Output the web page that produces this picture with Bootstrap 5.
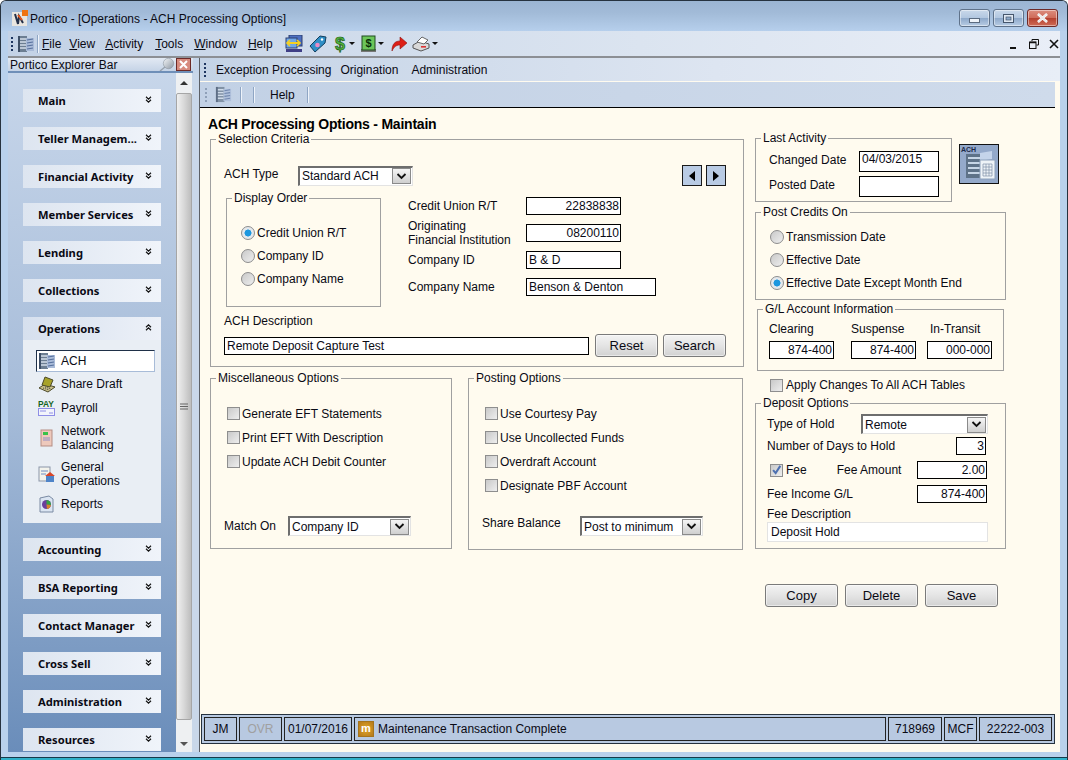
<!DOCTYPE html>
<html lang="en">
<head>
<meta charset="utf-8">
<title>Portico - ACH Processing Options</title>
<link href="https://cdn.jsdelivr.net/npm/bootstrap@5.3.0/dist/css/bootstrap.min.css" rel="stylesheet">
<style>
html,body{margin:0;width:1068px;height:760px;overflow:hidden;background:#fff}
body{font:12px/14px "Liberation Sans",Arial,sans-serif;color:#0a0a14}
.appwin{width:1068px;height:760px;display:flex;flex-direction:column;border:1px solid #26323f;border-bottom:0;border-radius:6px 6px 0 0;background:linear-gradient(#97b3d2,#b9d1ec 4%,#b9d1ec);overflow:hidden}
.titlebar{height:30px;flex:none;display:flex;align-items:center;padding:0 9px 0 10px;background:linear-gradient(#9bb5d3,#a2bbd8 40%,#b6cfec)}
.titlebar .ttl{margin-left:2px;font-size:12px;padding-top:5px}
.titlebar .tico{margin-top:5px}
.winbtns{margin-left:auto;display:flex;gap:3px;margin-top:4px}
.winbtn{width:31px;height:18px;border:1px solid #5f728a;border-radius:3px;background:linear-gradient(#c9d8ea,#b2c7e0 48%,#8ea9ca 52%,#b8cce4);display:flex;align-items:center;justify-content:center;box-shadow:inset 0 0 0 1px rgba(255,255,255,.45)}
.winbtn.cls{border-color:#6d2a28;background:linear-gradient(#dc8d7e,#cf6c5a 48%,#b5412f 52%,#cf6a55)}
.winbody{margin:0 7px;flex:none}
.menubar{height:27px;display:flex;align-items:center;background:linear-gradient(90deg,#c3d2e6,#dbe4f0 60%,#e9eef7);border-bottom:2px solid #8c8f94;padding-left:3px}
.grip{width:2px;height:14px;flex:none;background-image:linear-gradient(#1d3560 50%,transparent 50%);background-size:2px 4px}
.menuitem u{text-decoration-thickness:1px;text-underline-offset:1px}
.mitems{display:flex;align-items:center;height:100%}
.mdibtns{margin-left:auto;display:flex;align-items:center;gap:7px;padding-right:1px}
.work{display:flex;height:694px}
.leftpane{width:191px;flex:none;display:flex;flex-direction:column;background:#c6d5e9}
.exphead{height:13px;flex:none;width:181px;display:flex;align-items:center;padding:0 2px;background:linear-gradient(#e2e9f3,#c5d3e6);border-bottom:2px solid #6f8fb8;box-sizing:content-box}
.exphead .hdico{margin-left:auto;display:flex;gap:1px;align-items:center}
.leftbody{display:flex;flex:1;min-height:0}
.navpanel{width:168px;flex:none;padding:16px 0 0 15px;background:linear-gradient(#c7d6ea,#a5bbd8 50%,#6a8dba);overflow:hidden}
.navhead{width:138px;height:23px;margin-bottom:15px;display:flex;align-items:center;padding-left:15px;font:bold 11.2px/14px "Noto Sans",sans-serif;background:linear-gradient(90deg,#dde5f0,#f0f4fa)}
.navhead svg{margin-left:auto;margin-right:9px;margin-top:-3px}
.navgroup{width:138px;margin-bottom:15px}
.navgroup .navhead{margin-bottom:0;background:linear-gradient(90deg,#d6e0ee,#edf1f8)}
.navitems{background:#e9eef4;padding:10px 6px 7px 13px}
.navrow{display:flex;align-items:center;gap:5px;padding-left:2px;height:24px;line-height:14px}
.navrow.two{height:36px}
.navrow.sel{height:22px;background:#fff;border:1px solid;border-color:#1f3048 #a8bcd8 #a8bcd8 #1f3048;padding-left:1px}
.navrow svg{flex:none}
.vscroll{width:16px;flex:none;display:flex;flex-direction:column;background:#eef0f2;align-items:center}
.sarrow{height:20px;flex:none;display:flex;align-items:center;justify-content:center;width:100%}
.sarrow:last-child{margin-top:auto;height:16px}
.sthumb{height:627px;width:100%;flex:none;background:linear-gradient(90deg,#f0f0f0,#d8d8d8 50%,#bdbdbd);border:1px solid #a6a6a6;border-radius:2px;display:flex;align-items:center;justify-content:center}
.splitter{flex:1;background:#c9d7e9}
.mainpane{flex:1;min-width:0;display:flex;flex-direction:column;border-left:1px solid #5b5f66;background:#fffbef}
.submenu{height:23px;flex:none;display:flex;align-items:center;background:linear-gradient(90deg,#c4d3e6,#dde5f1 60%,#e8eef7);padding-left:4px}
.submenu .subm{display:flex;gap:9px;margin-left:10px}
.subtool{height:26px;flex:none;margin:1px 5px 0 0;display:flex;align-items:center;background:linear-gradient(90deg,#c2d1e5,#c9d6e8 50%,#cfdbeb);border-bottom:1px solid #000;padding-left:5px}
.tsep{width:1px;height:16px;background:#8fa6c4;box-shadow:1px 0 0 #eef3fa;flex:none}
.mbody{flex:1;min-height:0;display:flex;flex-direction:column}
.formwrap{display:flex;padding-left:10px}
.colleft{width:534px;flex:none}
.colright{width:252px;flex:none;margin-left:11px;padding-top:22px}
.pagehead{font:bold 14px/15px "Liberation Sans",sans-serif;height:23px;padding-top:9px;margin-left:-2px;color:#000;letter-spacing:-.22px}
.gbox{border:1px solid #a0a0a0;padding:0;margin:0;min-width:0}
.gbox>legend{float:none;width:auto;font-size:12px;line-height:16px;margin:0 0 0 5px;padding:0 2px;height:16px}
.sel-box{height:236px;margin-bottom:3px}
.rowtype{display:flex;align-items:center;height:21px;margin-top:18px;padding:0 17px 0 13px}
.rowtype .lbl{width:74px;margin-top:-3px}
.navbtns{margin-left:auto;display:flex;gap:4px}
.navbtn{width:20px;height:21px;background:#b9cbe4;border:1px solid #1a1a1a;display:flex;align-items:center;justify-content:center}
.rowmid{display:flex;margin-top:4px}
.disp-box{width:155px;height:117px;margin-left:15px;flex:none}
.radios{padding:15px 0 0 14px}
.optrow{display:flex;align-items:center;height:23px;gap:2px}
.form-check-input.wradio,.form-check-input.wcheck{width:14px;height:14px;margin:0;flex:none;background-color:#d8d8d8;background-image:linear-gradient(135deg,#c9c9c9,#eee);border:1px solid #8e8e8e;box-shadow:none;float:none;opacity:1}
.form-check-input.wradio{border-radius:50%}
.form-check-input.wradio:checked{background-color:#ddd;background-image:radial-gradient(circle,#1c97df 0 3.2px,#e4e8ec 3.8px 100%);border-color:#8e8e8e}
.form-check-input.wcheck{border-radius:0;width:13px;height:13px}
.form-check-input.wcheck:checked{background-color:#ddd;background-image:url("data:image/svg+xml,%3Csvg xmlns='http://www.w3.org/2000/svg' viewBox='0 0 13 13'%3E%3Cpath d='M2.500 6l3 3.500L11 1' fill='none' stroke='%234d70b0' stroke-width='2.400'/%3E%3C/svg%3E"),linear-gradient(135deg,#c9c9c9,#eee);background-size:auto;border-color:#8e8e8e}
.fieldscol{margin-left:27px;padding-top:7px;display:flex;flex-direction:column;gap:9px}
.fldrow{display:flex;align-items:center;height:18px}
.fldrow .lbl{width:118px;flex:none}
.form-control.fld{width:95px;height:18px;min-height:0;border:1px solid #000;border-radius:0;padding:0 1px 0 2px;font-size:12px;line-height:16px;color:#0a0a14;background:#fff;white-space:nowrap;overflow:hidden;box-shadow:none}
.form-control.fld.num{text-align:right}
.w130{width:130px!important}
.w365{width:365px!important}
.descl{margin:7px 0 0 13px;height:14px}
.descrow{display:flex;align-items:center;height:23px;margin:6px 0 0 13px;gap:5px}
.btn.wbtn{height:23px;padding:0;font-size:13px;line-height:21px;color:#0a0a14;border:1px solid #7a7a7a;border-radius:3px;background:linear-gradient(#f3f3f3,#e6e6e6 45%,#d2d2d2);box-shadow:inset 0 0 0 1px rgba(255,255,255,.5)}
.w63{width:63px}.w73{width:73px}
.lowrow{display:flex;gap:16px}
.misc-box{width:242px;height:179px}
.post-box{width:275px;height:180px}
.chkcol{padding:16px 0 0 16px;height:130px}
.chkrow{display:flex;align-items:center;height:24px;gap:2px}
.chkrow .form-check-input{margin-top:-1px}
.combo.form-select{display:flex;align-items:center;height:20px;min-height:0;padding:0 1px 0 2px;font-size:12px;line-height:14px;color:#0a0a14;background:#fff;border:0;border-radius:0;border-top:2px solid #6e6e6e;border-left:2px solid #6e6e6e;border-right:1px solid #e3e3e3;border-bottom:1px solid #e3e3e3;box-shadow:none;flex:none}
.combo .cbtn{margin-left:auto;width:19px;height:16px;background:linear-gradient(#f5f5f5,#cfcfcf);border:1px solid #8a8a8a;display:flex;align-items:center;justify-content:center;flex:none}
.botrow{display:flex;align-items:center;height:20px;margin-left:13px}
.last-box{width:197px;height:72px;flex:none}
.lastwrap{display:flex;margin-bottom:2px}
.lastfields{padding:5px 0 0 13px;display:flex;flex-direction:column;gap:4px}
.lastrow{display:flex;align-items:center;height:21px}
.lastrow .lbl{width:90px;margin-top:-3px}
.w80{width:80px!important;height:21px!important;line-height:15px!important}
.achpic{width:40px;height:40px;margin:14px 0 0 7px;border:1px solid #111;background:#94a9ca;flex:none}
.credit-box{width:251px;height:96px;margin-bottom:1px}
.credit-box .radios{padding:5px 0 0 14px}
.gl-box{width:247px;height:70px;margin-left:2px}
.glgrid{display:flex;padding:5px 0 0 11px}
.glcol{display:flex;flex-direction:column;gap:5px}
.glcol .form-control.fld{width:65px}
.applyrow{display:flex;align-items:center;height:18px;gap:3px;margin:5px 0 1px 15px}
.dep-box{width:251px;height:154px}
.deprows{padding:3px 0 0 11px}
.w30{width:30px!important}
.w70{width:70px!important}
.feedesc{width:221px;height:20px;background:#fff;border:1px solid #e3e3e3;padding:0 3px;display:flex;align-items:center;margin-top:1px}
.actbtns{display:flex;gap:7px;margin:35px 0 0 10px}
.statbar{margin:auto 5px 8px 1px;height:30px;flex:none;border:1px solid #26323f;background:#b8c9e1;display:flex;gap:2px;padding:2px 2px 2px 2px}
.stcell{border:1px solid #222;display:flex;align-items:center;justify-content:center;flex:none}
.stgrow{flex:1;justify-content:flex-start;padding-left:3px;gap:4px}
.mchip{width:16px;height:16px;background:radial-gradient(#e3a72a,#b4791a);color:#fff;font:bold 11px/13px "Liberation Sans",sans-serif;text-align:center;flex:none;border:1px solid #a5741c}
.winfoot{height:5px;flex:none}
.wintail{flex:1;background:#30b0c8;border-top:1px solid #16394a}
</style>
</head>
<body>
<svg class="d-none">
<symbol id="books" viewBox="0 0 18 18">
<rect x="1" y="1" width="9" height="16" fill="#6c7e92"/><rect x="9" y="3" width="8" height="13" fill="#a9bbd8"/>
<path d="M2 4h7M2 7h7M2 10h7M2 13h7" stroke="#d4deea" stroke-width="1.4"/>
<path d="M10 5l6-1M10 8l6-1M10 11l6-1M10 14l6-1" stroke="#566f9c" stroke-width="1.2"/>
<rect x="1" y="1" width="2" height="16" fill="#3d4e66"/>
</symbol>
<symbol id="dbl" viewBox="0 0 7 7"><path d="M1 .8l2.500 2.300L6 .8M1 3.800l2.500 2.300L6 3.800" fill="none" stroke="#111" stroke-width="1.2"/></symbol>
<symbol id="dblup" viewBox="0 0 7 7"><path d="M1 3.200L3.500.9 6 3.200M1 6.200l2.500-2.300L6 6.200" fill="none" stroke="#111" stroke-width="1.2"/></symbol>
<symbol id="chv" viewBox="0 0 11 7"><path d="M1.500 1l4 4 4-4" fill="none" stroke="#111" stroke-width="1.800"/></symbol>
<symbol id="car" viewBox="0 0 6 3"><path d="M0 0h6L3 3z" fill="#111"/></symbol>
</svg>
<div class="appwin">
  <div class="titlebar">
    <svg class="tico" width="17" height="17" viewBox="0 0 17 17"><rect x="1" y="2" width="15" height="14" fill="#e9e6e0"/><rect x="11" y="0" width="6" height="6" fill="#ef7412"/><path d="M4 4l3 10 1-8 4 7" fill="none" stroke="#23304a" stroke-width="2"/><path d="M7 5l4 5" stroke="#e6561a" stroke-width="2"/></svg>
    <span class="ttl">Portico - [Operations - ACH Processing Options]</span>
    <div class="winbtns">
      <div class="winbtn"><svg width="11" height="5" viewBox="0 0 11 5" class="mt-1"><rect x=".5" y=".5" width="10" height="4" fill="#eef3f9" stroke="#5b6b80"/></svg></div>
      <div class="winbtn"><svg width="11" height="9" viewBox="0 0 11 9"><rect x=".5" y=".5" width="10" height="8" fill="#dfe8f3" stroke="#46566c"/><rect x="3" y="3" width="5" height="3" fill="#8ea9ca" stroke="#46566c" stroke-width=".7"/></svg></div>
      <div class="winbtn cls"><svg width="13" height="10" viewBox="0 0 13 10"><path d="M2 1l9 8M11 1L2 9" stroke="#fff" stroke-width="2.600"/><path d="M2 1l9 8M11 1L2 9" stroke="#e9e9e9" stroke-width="1.600"/></svg></div>
    </div>
  </div>
  <div class="winbody">
    <div class="menubar">
      <div class="grip"></div>
      <svg width="18" height="18" class="ms-1"><use href="#books"/></svg>
      <div class="tsep" style="height:18px;margin-left:2px"></div>
      <div class="mitems" id="menu">
        <span class="menuitem" style="margin-left:4px"><u>F</u>ile</span>
        <span class="menuitem" style="margin-left:8px"><u>V</u>iew</span>
        <span class="menuitem" style="margin-left:10px"><u>A</u>ctivity</span>
        <span class="menuitem" style="margin-left:12px"><u>T</u>ools</span>
        <span class="menuitem" style="margin-left:11px"><u>W</u>indow</span>
        <span class="menuitem" style="margin-left:11px"><u>H</u>elp</span>
      </div>
      <div class="d-flex align-items-center" style="margin-left:12px">
        <svg width="18" height="18" viewBox="0 0 18 18"><rect x="4" y="0" width="13" height="11" fill="#4d6fc0" stroke="#2c3e70"/><rect x="1" y="3" width="11" height="10" fill="#6fa7e8" stroke="#2c3e70"/><path d="M2 8h13" stroke="#f5d020" stroke-width="2"/><path d="M5 5L2 8l3 3M12 5l3 3-3 3" fill="none" stroke="#f5d020" stroke-width="1.600"/><rect x="1" y="14" width="16" height="3" fill="#3f3f86"/></svg>
        <svg width="18" height="18" viewBox="0 0 18 18" style="margin-left:6px"><path d="M1 11L11 1l6 1-1 6L6 17z" fill="#2f8fc6" stroke="#123e5e"/><circle cx="8.500" cy="10" r="2.300" fill="#e88bc6"/><circle cx="13" cy="4.500" r="1.200" fill="#fff"/></svg>
        <svg width="12" height="18" viewBox="0 0 12 18" style="margin-left:7px"><text x="6" y="15" text-anchor="middle" font-family="Liberation Sans" font-weight="700" font-size="18" fill="#52b53c" stroke="#1f5e1c" stroke-width=".7">$</text></svg>
        <svg width="6" height="3" style="margin-left:3px"><use href="#car"/></svg>
        <svg width="17" height="18" viewBox="0 0 17 18" style="margin-left:5px"><rect x="1" y="14" width="15" height="3" fill="#777"/><rect x="2" y="1" width="13" height="14" fill="#6cc65a" stroke="#1f4a1e"/><text x="8.500" y="12" text-anchor="middle" font-family="Liberation Sans" font-weight="700" font-size="11" fill="#083008">$</text></svg>
        <svg width="6" height="3" style="margin-left:1px"><use href="#car"/></svg>
        <svg width="17" height="17" viewBox="0 0 17 17" style="margin-left:7px"><path d="M1 16c0-7 3-10 8-10V2l7 6-7 6v-4c-4 0-6 2-8 6z" fill="#dd1f16" stroke="#8f1410" stroke-width=".6"/></svg>
        <svg width="18" height="16" viewBox="0 0 18 16" style="margin-left:4px"><path d="M1 9l7-4 9 3v4l-8 3-8-3z" fill="#d9d9d9" stroke="#555"/><path d="M5 6l5-5 6 3-4 4z" fill="#fff" stroke="#666"/><rect x="9" y="10" width="5" height="1.600" fill="#d33"/></svg>
        <svg width="6" height="3" style="margin-left:2px"><use href="#car"/></svg>
      </div>
      <div class="mdibtns">
        <svg width="10" height="10" viewBox="0 0 10 10" class="me-1"><rect x="2" y="8" width="6" height="2" fill="#111"/></svg>
        <svg width="10" height="10" viewBox="0 0 10 10"><path d="M3 2V.5h6.500V6H7.500" fill="none" stroke="#111"/><rect x=".5" y="3" width="6.500" height="6.500" fill="none" stroke="#111"/><path d="M1 3.500h6" stroke="#111" stroke-width="1.400"/></svg>
        <svg width="10" height="10" viewBox="0 0 10 10" style="margin-left:3px"><path d="M1 1l8 8M9 1L1 9" stroke="#111" stroke-width="1.600"/></svg>
      </div>
    </div>
    <div class="work">
      <div class="leftpane">
        <div class="exphead"><span>Portico Explorer Bar</span>
          <span class="hdico">
            <svg width="16" height="13" viewBox="0 0 16 13"><defs><linearGradient id="pinfill" x1="0" y1="0" x2="1" y2="1"><stop offset="0" stop-color="#f4f6f8"/><stop offset="1" stop-color="#8d97a3"/></linearGradient></defs><circle cx="9.500" cy="5.500" r="5.200" fill="url(#pinfill)" stroke="#8f98a3" stroke-width=".6"/><path d="M6 9l-5 4" stroke="#98a1ac" stroke-width="1.400"/></svg>
            <svg width="15" height="13" viewBox="0 0 15 13"><rect x=".5" y=".5" width="14" height="12" fill="#d78b7e" stroke="#6d2a28"/><path d="M4 3l7 7M11 3l-7 7" stroke="#fff" stroke-width="2"/></svg>
          </span>
        </div>
        <div class="leftbody">
          <nav class="navpanel">
            <div class="navhead">Main<svg width="7" height="7"><use href="#dbl"/></svg></div>
            <div class="navhead">Teller Managem...<svg width="7" height="7"><use href="#dbl"/></svg></div>
            <div class="navhead">Financial Activity<svg width="7" height="7"><use href="#dbl"/></svg></div>
            <div class="navhead">Member Services<svg width="7" height="7"><use href="#dbl"/></svg></div>
            <div class="navhead">Lending<svg width="7" height="7"><use href="#dbl"/></svg></div>
            <div class="navhead">Collections<svg width="7" height="7"><use href="#dbl"/></svg></div>
            <div class="navgroup">
              <div class="navhead">Operations<svg width="7" height="7"><use href="#dblup"/></svg></div>
              <div class="navitems">
                <div class="navrow sel"><svg width="18" height="18"><use href="#books"/></svg><span>ACH</span></div>
                <div class="navrow"><svg width="18" height="18" viewBox="0 0 18 18"><path d="M1 13l6-4 10 3-7 5z" fill="#c9c08a" stroke="#4d4a2a"/><path d="M4 10L7 2l8 3-3 7z" fill="#a7a22a" stroke="#4d4a2a"/><path d="M5 13l6 2M7 12l6 2" stroke="#444" stroke-dasharray="1 1"/></svg><span>Share Draft</span></div>
                <div class="navrow"><svg width="18" height="18" viewBox="0 0 18 18"><text x="0" y="7.500" font-family="Liberation Sans" font-weight="700" font-size="8.400" fill="#14631f">PAY</text><rect x=".5" y="9.500" width="16" height="7" fill="#f2f4fb" stroke="#8e8ee6"/><path d="M2 12h6M11 14h4" stroke="#8e8ee6"/></svg><span>Payroll</span></div>
                <div class="navrow two"><svg width="18" height="18" viewBox="0 0 18 18"><rect x="3" y="1" width="11" height="16" fill="#eec9bc" stroke="#b58d84"/><rect x="5" y="3" width="5" height="3" fill="#38c24a"/><path d="M5 9h7M5 11h7" stroke="#8f8fc6"/></svg><span>Network<br>Balancing</span></div>
                <div class="navrow two"><svg width="18" height="18" viewBox="0 0 18 18"><rect x="1" y="2" width="11" height="14" fill="#f3f3ec" stroke="#8b95a8"/><path d="M3 6h7M3 9h5" stroke="#6f8cc0"/><path d="M7 11l5-4 5 4" fill="#d8472a"/><rect x="8" y="11" width="8" height="6" fill="#4f84c8"/></svg><span>General<br>Operations</span></div>
                <div class="navrow"><svg width="18" height="18" viewBox="0 0 18 18"><path d="M2 3l9-2 4 3v13H2z" fill="#dbe5f2" stroke="#7a8aa3"/><circle cx="8.500" cy="9.500" r="4.500" fill="#6a3f9c"/><path d="M8.500 9.500V5a4.500 4.500 0 0 1 4.400 5z" fill="#35a444"/><path d="M8.500 9.500l4.400.5a4.500 4.500 0 0 1-4 4z" fill="#d8852a"/></svg><span>Reports</span></div>
              </div>
            </div>
            <div class="navhead">Accounting<svg width="7" height="7"><use href="#dbl"/></svg></div>
            <div class="navhead">BSA Reporting<svg width="7" height="7"><use href="#dbl"/></svg></div>
            <div class="navhead">Contact Manager<svg width="7" height="7"><use href="#dbl"/></svg></div>
            <div class="navhead">Cross Sell<svg width="7" height="7"><use href="#dbl"/></svg></div>
            <div class="navhead">Administration<svg width="7" height="7"><use href="#dbl"/></svg></div>
            <div class="navhead">Resources<svg width="7" height="7"><use href="#dbl"/></svg></div>
          </nav>
          <div class="vscroll">
            <div class="sarrow"><svg width="8" height="4" viewBox="0 0 8 4"><path d="M0 4l4-4 4 4z" fill="#333"/></svg></div>
            <div class="sthumb"><svg width="8" height="7" viewBox="0 0 8 7"><path d="M0 1h8M0 3.500h8M0 6h8" stroke="#666"/></svg></div>
            <div class="sarrow"><svg width="8" height="4" viewBox="0 0 8 4"><path d="M0 0l4 4 4-4z" fill="#555"/></svg></div>
          </div>
          <div class="splitter"></div>
        </div>
      </div>
      <div class="mainpane">
        <div class="submenu">
          <div class="grip"></div>
          <div class="subm"><span>Exception Processing</span><span>Origination</span><span class="ms-1">Administration</span></div>
        </div>
        <div class="subtool">
          <div class="grip" style="background-image:linear-gradient(#8fa0b8 50%,transparent 50%)"></div>
          <svg width="17" height="17" style="margin-left:8px;opacity:.75"><use href="#books"/></svg>
          <div class="tsep" style="margin-left:8px"></div>
          <div class="tsep" style="margin-left:12px"></div>
          <span style="margin-left:16px">Help</span>
          <div class="tsep" style="margin-left:12px"></div>
        </div>
        <div class="mbody">
          <div class="formwrap">
            <div class="colleft">
              <div class="pagehead">ACH Processing Options - Maintain</div>
              <fieldset class="gbox sel-box">
                <legend>Selection Criteria</legend>
                <div class="rowtype">
                  <span class="lbl">ACH Type</span>
                  <div class="combo form-select" style="width:115px">Standard ACH<span class="cbtn"><svg width="11" height="7"><use href="#chv"/></svg></span></div>
                  <div class="navbtns">
                    <div class="navbtn"><svg width="6" height="10" viewBox="0 0 6 10"><path d="M6 0v10L0 5z" fill="#000"/></svg></div>
                    <div class="navbtn"><svg width="6" height="10" viewBox="0 0 6 10"><path d="M0 0v10l6-5z" fill="#000"/></svg></div>
                  </div>
                </div>
                <div class="rowmid">
                  <fieldset class="gbox disp-box">
                    <legend>Display Order</legend>
                    <div class="radios">
                      <div class="optrow"><input class="form-check-input wradio" type="radio" name="ord" checked><span>Credit Union R/T</span></div>
                      <div class="optrow"><input class="form-check-input wradio" type="radio" name="ord"><span>Company ID</span></div>
                      <div class="optrow"><input class="form-check-input wradio" type="radio" name="ord"><span>Company Name</span></div>
                    </div>
                  </fieldset>
                  <div class="fieldscol">
                    <div class="fldrow"><span class="lbl">Credit Union R/T</span><div class="form-control fld num">22838838</div></div>
                    <div class="fldrow"><span class="lbl">Originating<br>Financial Institution</span><div class="form-control fld num">08200110</div></div>
                    <div class="fldrow"><span class="lbl">Company ID</span><div class="form-control fld">B &amp; D</div></div>
                    <div class="fldrow"><span class="lbl">Company Name</span><div class="form-control fld w130">Benson &amp; Denton</div></div>
                  </div>
                </div>
                <div class="descl">ACH Description</div>
                <div class="descrow">
                  <div class="form-control fld w365">Remote Deposit Capture Test</div>
                  <button class="btn wbtn w63" style="margin-left:1px" type="button">Reset</button>
                  <button class="btn wbtn w63" type="button">Search</button>
                </div>
              </fieldset>
              <div class="lowrow">
                <fieldset class="gbox misc-box">
                  <legend>Miscellaneous Options</legend>
                  <div class="chkcol">
                    <div class="chkrow"><input class="form-check-input wcheck" type="checkbox"><span>Generate EFT Statements</span></div>
                    <div class="chkrow"><input class="form-check-input wcheck" type="checkbox"><span>Print EFT With Description</span></div>
                    <div class="chkrow"><input class="form-check-input wcheck" type="checkbox"><span>Update ACH Debit Counter</span></div>
                  </div>
                  <div class="botrow">
                    <span style="width:64px;margin-top:-1px">Match On</span>
                    <div class="combo form-select" style="width:123px">Company ID<span class="cbtn"><svg width="11" height="7"><use href="#chv"/></svg></span></div>
                  </div>
                </fieldset>
                <fieldset class="gbox post-box">
                  <legend>Posting Options</legend>
                  <div class="chkcol">
                    <div class="chkrow"><input class="form-check-input wcheck" type="checkbox"><span>Use Courtesy Pay</span></div>
                    <div class="chkrow"><input class="form-check-input wcheck" type="checkbox"><span>Use Uncollected Funds</span></div>
                    <div class="chkrow"><input class="form-check-input wcheck" type="checkbox"><span>Overdraft Account</span></div>
                    <div class="chkrow"><input class="form-check-input wcheck" type="checkbox"><span>Designate PBF Account</span></div>
                  </div>
                  <div class="botrow">
                    <span style="width:98px;margin-top:-7px">Share Balance</span>
                    <div class="combo form-select" style="width:123px">Post to minimum<span class="cbtn"><svg width="11" height="7"><use href="#chv"/></svg></span></div>
                  </div>
                </fieldset>
              </div>
            </div>
            <div class="colright">
              <div class="lastwrap">
                <fieldset class="gbox last-box">
                  <legend>Last Activity</legend>
                  <div class="lastfields">
                    <div class="lastrow"><span class="lbl">Changed Date</span><div class="form-control fld w80">04/03/2015</div></div>
                    <div class="lastrow"><span class="lbl">Posted Date</span><div class="form-control fld w80"></div></div>
                  </div>
                </fieldset>
                <div class="achpic">
                  <svg width="38" height="38" viewBox="0 0 38 38"><text x="1" y="7" font-family="Liberation Sans" font-size="7" font-weight="700" fill="#1c2a4a">ACH</text><rect x="6" y="9" width="16" height="24" fill="#5e7288"/><path d="M8 13h12M8 18h12M8 23h12M8 28h12" stroke="#c6d5e6" stroke-width="2"/><path d="M20 8l12-2v8l-12 2z" fill="#c5d4ea"/><rect x="20" y="15" width="15" height="19" fill="#eef3f7" stroke="#8ea2bb"/><path d="M23 19h9v12h-9zM23 22h9M23 25h9M23 28h9M26 19v12M29 19v12" fill="none" stroke="#8090a8" stroke-width=".7"/></svg>
                </div>
              </div>
              <fieldset class="gbox credit-box">
                <legend>Post Credits On</legend>
                <div class="radios">
                  <div class="optrow"><input class="form-check-input wradio" type="radio" name="cr"><span>Transmission Date</span></div>
                  <div class="optrow"><input class="form-check-input wradio" type="radio" name="cr"><span>Effective Date</span></div>
                  <div class="optrow"><input class="form-check-input wradio" type="radio" name="cr" checked><span>Effective Date Except Month End</span></div>
                </div>
              </fieldset>
              <fieldset class="gbox gl-box">
                <legend>G/L Account Information</legend>
                <div class="glgrid">
                  <div class="glcol"><span>Clearing</span><div class="form-control fld num">874-400</div></div>
                  <div class="glcol" style="margin-left:17px"><span>Suspense</span><div class="form-control fld num">874-400</div></div>
                  <div class="glcol" style="margin-left:11px"><span style="margin-left:3px">In-Transit</span><div class="form-control fld num">000-000</div></div>
                </div>
              </fieldset>
              <div class="applyrow"><input class="form-check-input wcheck" type="checkbox"><span>Apply Changes To All ACH Tables</span></div>
              <fieldset class="gbox dep-box">
                <legend>Deposit Options</legend>
                <div class="deprows">
                  <div class="d-flex align-items-center" style="height:20px"><span style="width:94px">Type of Hold</span><div class="combo form-select" style="width:127px">Remote<span class="cbtn"><svg width="11" height="7"><use href="#chv"/></svg></span></div></div>
                  <div class="d-flex align-items-center" style="height:18px;margin-top:3px"><span>Number of Days to Hold</span><div class="form-control fld num w30 ms-auto" style="margin-right:19px">3</div></div>
                  <div class="d-flex align-items-center" style="height:18px;margin-top:6px"><input class="form-check-input wcheck" type="checkbox" checked style="margin-left:3px"><span style="margin-left:3px">Fee</span><span style="margin-left:30px">Fee Amount</span><div class="form-control fld num w70 ms-auto" style="margin-right:18px">2.00</div></div>
                  <div class="d-flex align-items-center" style="height:18px;margin-top:6px"><span>Fee Income G/L</span><div class="form-control fld num w70 ms-auto" style="margin-right:18px">874-400</div></div>
                  <div style="margin-top:4px">Fee Description</div>
                  <div class="feedesc">Deposit Hold</div>
                </div>
              </fieldset>
              <div class="actbtns">
                <button class="btn wbtn w73" type="button">Copy</button>
                <button class="btn wbtn w73" type="button">Delete</button>
                <button class="btn wbtn w73" type="button">Save</button>
              </div>
            </div>
          </div>
          <div class="statbar">
            <div class="stcell" style="width:33px">JM</div>
            <div class="stcell" style="width:43px;color:#a0a0a0">OVR</div>
            <div class="stcell" style="width:68px">01/07/2016</div>
            <div class="stcell stgrow"><span class="mchip">m</span><span>Maintenance Transaction Complete</span></div>
            <div class="stcell" style="width:54px">718969</div>
            <div class="stcell" style="width:33px">MCF</div>
            <div class="stcell" style="width:73px">22222-003</div>
          </div>
        </div>
      </div>
    </div>
  </div>
  <div class="winfoot"></div>
  <div class="wintail"></div>
</div>
<script src="https://cdn.jsdelivr.net/npm/bootstrap@5.3.0/dist/js/bootstrap.bundle.min.js"></script>
</body>
</html>
